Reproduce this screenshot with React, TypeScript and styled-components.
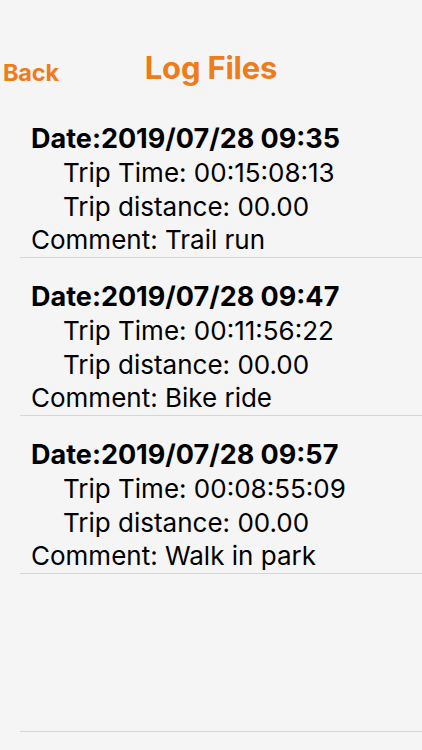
import React from 'react';
import styled, { createGlobalStyle } from 'styled-components';

const GlobalStyle = createGlobalStyle`
  html, body {
    margin: 0;
    padding: 0;
    background: #f5f5f5;
    font-family: Inter, "Liberation Sans", sans-serif;
  }
`;

const Screen = styled.div`
  width: 422px;
  height: 750px;
  background: #f5f5f5;
  display: flex;
  flex-direction: column;
  overflow: hidden;
`;

const NavBar = styled.div`
  height: 60px;
  margin-top: 40px;
  display: grid;
  grid-template-columns: 1fr auto 1fr;
  align-items: start;
`;

const BackButton = styled.button`
  justify-self: start;
  border: none;
  background: none;
  padding: 0 0 0 3px;
  margin-top: 19px;
  line-height: 28px;
  color: #ee7c1a;
  font-family: inherit;
  font-size: 23.5px;
  font-weight: 700;
  letter-spacing: -0.2px;
`;

const Title = styled.h1`
  margin: 10px 0 0;
  line-height: 36px;
  color: #ee7c1a;
  font-size: 31px;
  font-weight: 700;
  letter-spacing: -0.2px;
`;

const List = styled.div`
  display: flex;
  flex-direction: column;
  padding-left: 20px;
  flex: 1;
`;

const Entry = styled.div`
  padding: 22px 0 0 11px;
  border-bottom: 1px solid #d6d6d9;
  display: flex;
  flex-direction: column;
`;

const Line = styled.div<{ $bold?: boolean; $indent?: boolean }>`
  height: 33.75px;
  line-height: 33.75px;
  font-size: ${(p) => (p.$bold ? '27px' : '26px')};
  color: #000;
  font-weight: ${(p) => (p.$bold ? 700 : 400)};
  padding-left: ${(p) => (p.$indent ? '32px' : '0')};
  white-space: nowrap;
`;

const Filler = styled.div`
  height: 157px;
  border-bottom: 1px solid #d6d6d9;
`;

const logs = [
  { date: '2019/07/28 09:35', time: '00:15:08:13', distance: '00.00', comment: 'Trail run' },
  { date: '2019/07/28 09:47', time: '00:11:56:22', distance: '00.00', comment: 'Bike ride' },
  { date: '2019/07/28 09:57', time: '00:08:55:09', distance: '00.00', comment: 'Walk in park' },
];

export default function App() {
  return (
    <Screen>
      <GlobalStyle />
      <NavBar>
        <BackButton>Back</BackButton>
        <Title>Log Files</Title>
      </NavBar>
      <List>
        {logs.map((log, index) => (
          <Entry key={index}>
            <Line $bold>Date:{log.date}</Line>
            <Line $indent>Trip Time: {log.time}</Line>
            <Line $indent>Trip distance: {log.distance}</Line>
            <Line>Comment: {log.comment}</Line>
          </Entry>
        ))}
        <Filler />
      </List>
    </Screen>
  );
}
